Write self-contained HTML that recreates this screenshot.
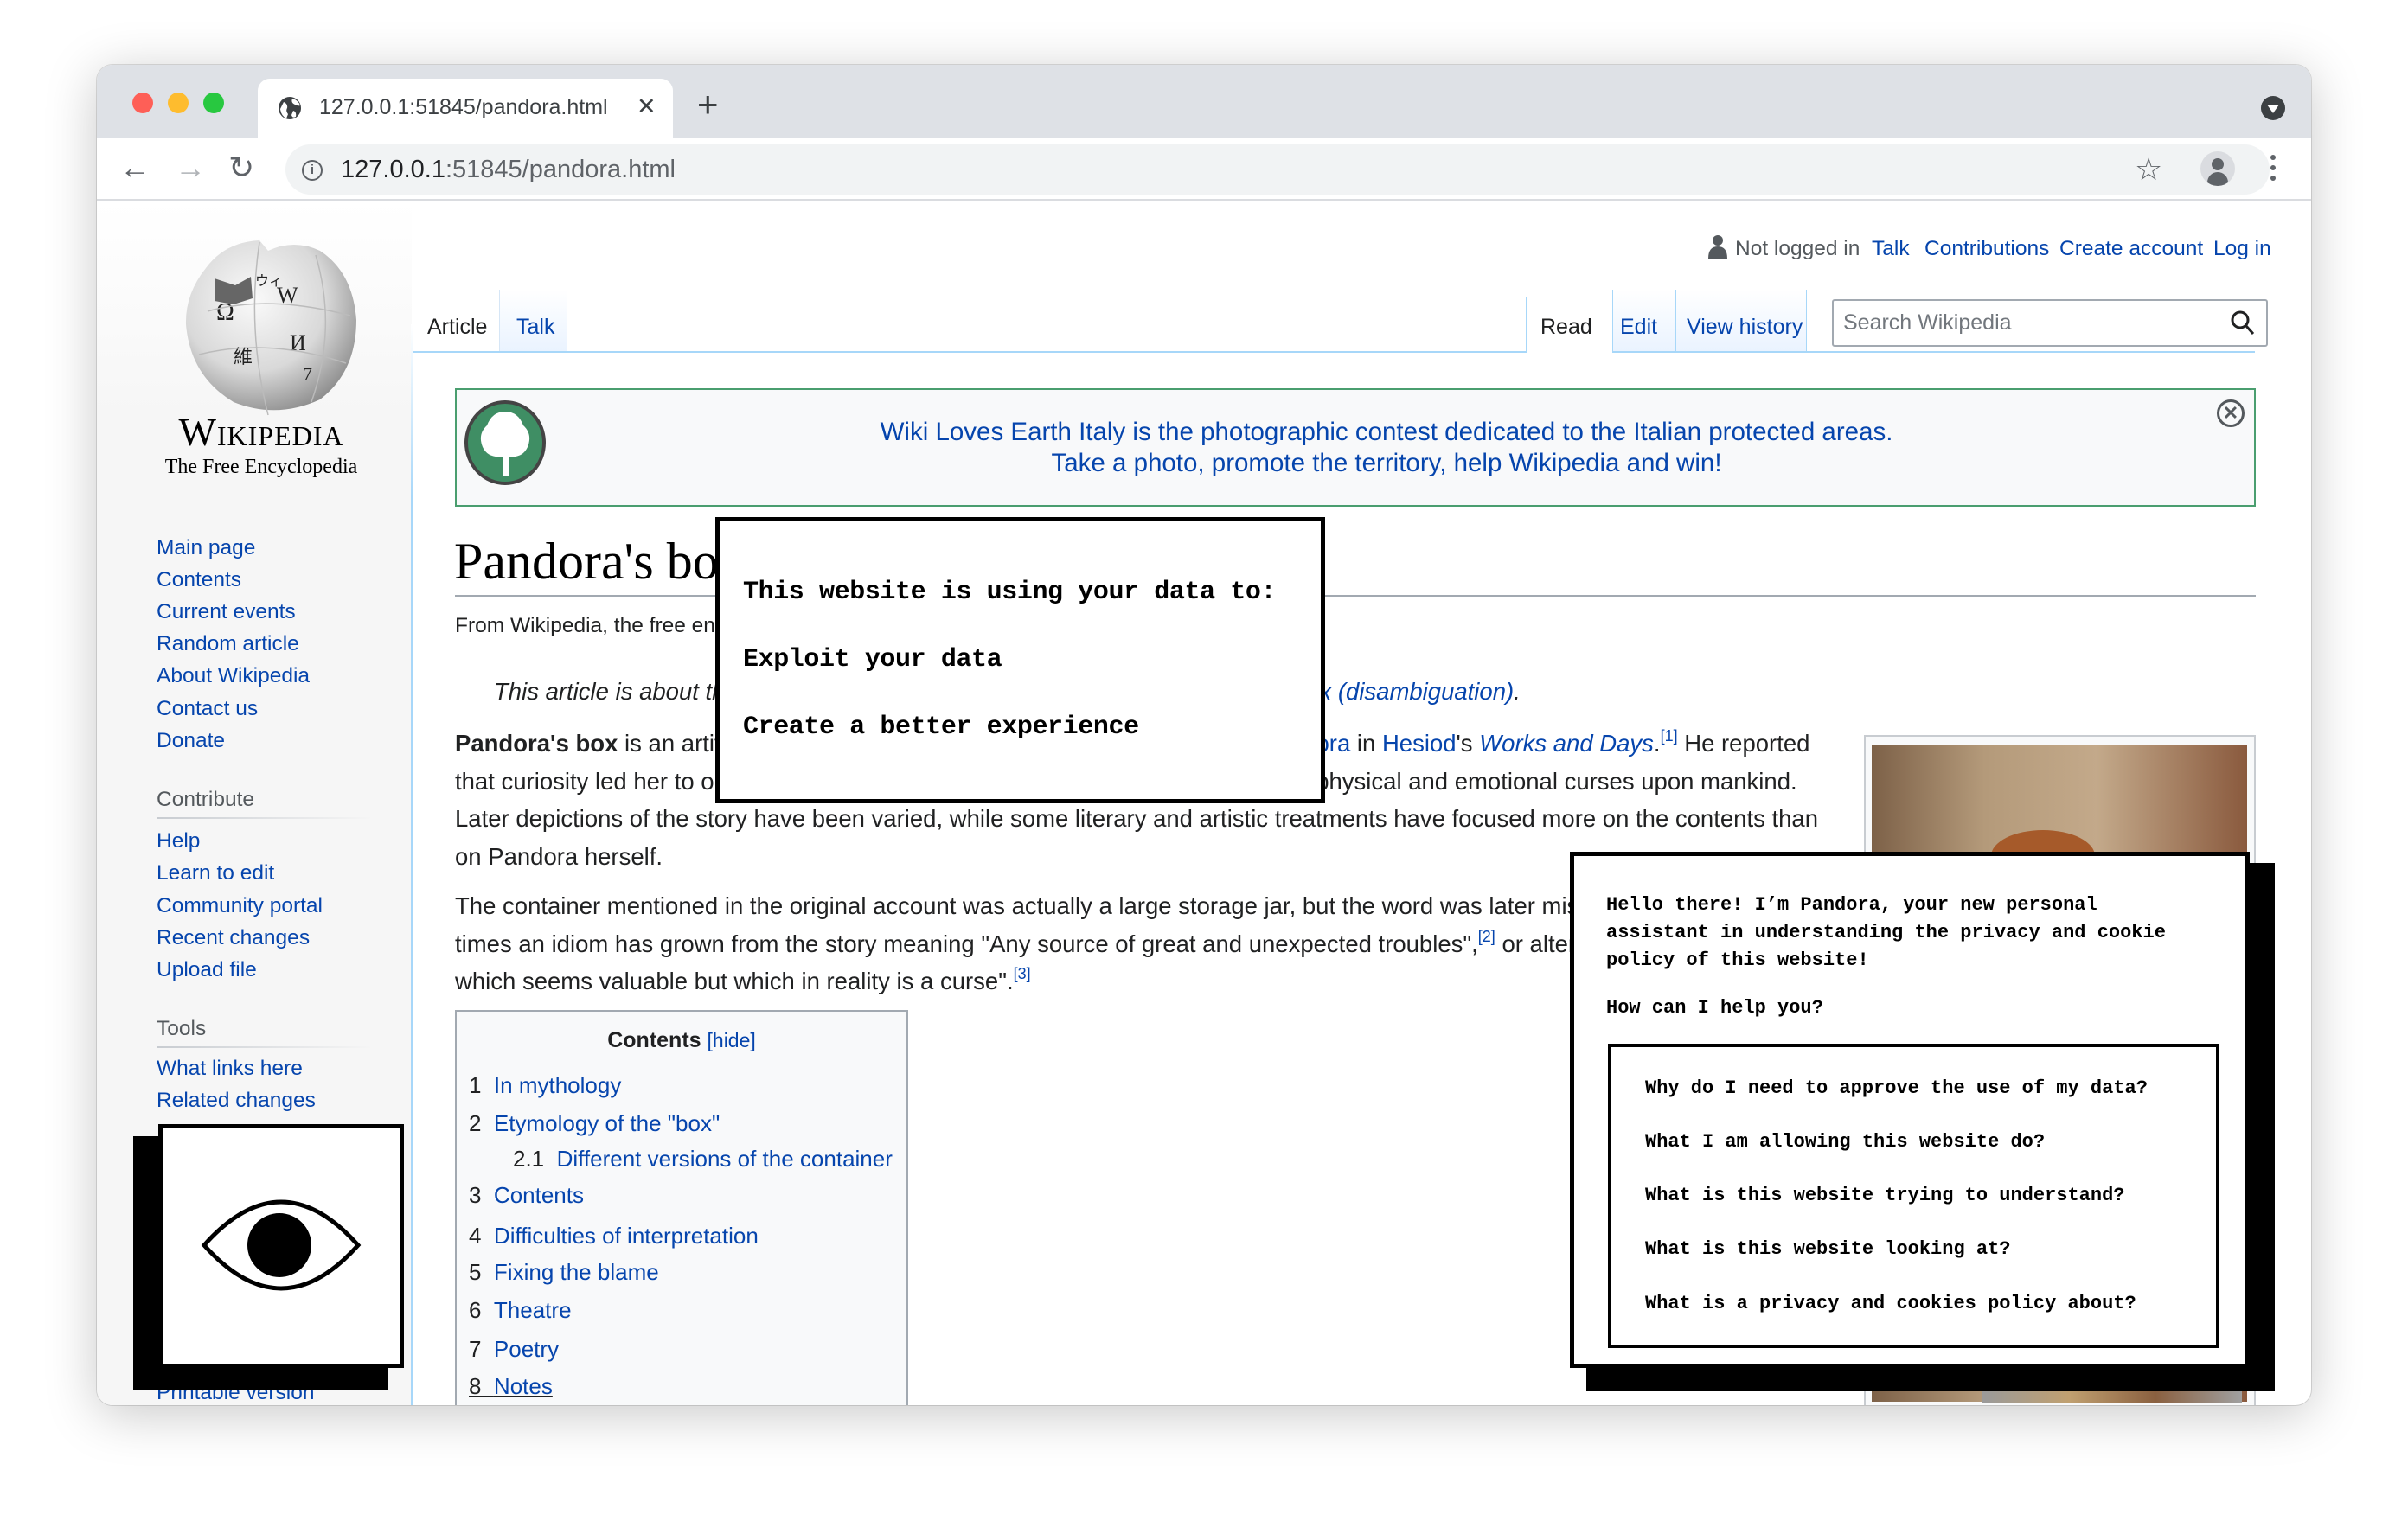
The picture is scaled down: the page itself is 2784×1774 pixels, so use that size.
<!DOCTYPE html>
<html><head><meta charset="utf-8">
<style>
*{margin:0;padding:0;box-sizing:border-box}
body{width:2784px;height:1774px;background:#fff;position:relative;overflow:hidden;font-family:"Liberation Sans",Arial,sans-serif}
.a{position:absolute;white-space:nowrap}
.win{position:absolute;left:112px;top:75px;width:2560px;height:1550px;border-radius:18px;overflow:hidden;background:#fff;box-shadow:0 10px 60px rgba(0,0,0,.22),0 0 0 1px rgba(0,0,0,.12)}
.lnk{color:#0645ad}
.sb{font-size:24.5px;color:#0645ad;left:69px}
.body{font-size:26.5px;color:#202122}
.pop{font-family:"Liberation Mono",monospace;font-weight:bold;color:#000}
sup{line-height:0;font-size:18px;vertical-align:12px}
</style></head><body>
<div class="win">
 <div class="a" style="left:0;top:0;width:2560px;height:85px;background:#dee1e6"></div>
 <div class="a" style="left:41px;top:32px;width:24px;height:24px;border-radius:50%;background:#fe5f57"></div>
 <div class="a" style="left:82px;top:32px;width:24px;height:24px;border-radius:50%;background:#febc2e"></div>
 <div class="a" style="left:123px;top:32px;width:24px;height:24px;border-radius:50%;background:#28c840"></div>
 <div class="a" style="left:186px;top:16px;width:480px;height:72px;background:#fff;border-radius:14px 14px 0 0"></div>
 <svg class="a" style="left:208px;top:35px" width="30" height="30" viewBox="0 0 30 30"><circle cx="15" cy="15" r="13" fill="#3c4043"/><path d="M8 8 Q13 10 12 15 Q10 18 13 22 L11 27 Q5 24 4 16Z M18 4 Q16 9 21 11 Q25 13 27 12 Q25 6 18 4Z M19 18 Q23 19 22 25 Q18 27 17 23Z" fill="#fff"/></svg>
 <div class="a" style="left:257px;top:35px;font-size:25px;color:#3c4043">127.0.0.1:51845/pandora.html</div>
 <div class="a" style="left:624px;top:33px;font-size:27px;color:#3c4043">✕</div>
 <div class="a" style="left:694px;top:22px;font-size:42px;color:#3c4043;font-weight:300">+</div>
 <div class="a" style="left:2502px;top:36px;width:28px;height:28px;border-radius:50%;background:#3c4043"></div>
 <div class="a" style="left:2509px;top:46px;width:0;height:0;border-left:7px solid transparent;border-right:7px solid transparent;border-top:10px solid #fff"></div>
 <div class="a" style="left:0;top:85px;width:2560px;height:72px;background:#fff;border-bottom:2px solid #dadce0"></div>
 <div class="a" style="left:26px;top:98px;font-size:36px;color:#5f6368">←</div>
 <div class="a" style="left:90px;top:98px;font-size:36px;color:#b0b3b7">→</div>
 <div class="a" style="left:152px;top:98px;font-size:36px;color:#5f6368">↻</div>
 <div class="a" style="left:218px;top:92px;width:2294px;height:58px;border-radius:29px;background:#f1f3f4"></div>
 <div class="a" style="left:237px;top:110px;width:24px;height:24px;border:2.5px solid #5f6368;border-radius:50%;font-size:15px;text-align:center;line-height:19px;color:#5f6368;font-weight:bold">i</div>
 <div class="a" style="left:282px;top:105px;font-size:29px;color:#202124">127.0.0.1<span style="color:#5f6368">:51845/pandora.html</span></div>
 <div class="a" style="left:2356px;top:100px;font-size:36px;color:#5f6368">☆</div>
 <div class="a" style="left:2432px;top:100px;width:40px;height:40px;border-radius:50%;background:#dadce0;overflow:hidden"><div style="position:absolute;left:13px;top:8px;width:14px;height:14px;border-radius:50%;background:#5f6368"></div><div style="position:absolute;left:8px;top:24px;width:24px;height:18px;border-radius:12px 12px 0 0;background:#5f6368"></div></div>
 <div class="a" style="left:2513px;top:104px;width:6px;height:6px;border-radius:50%;background:#5f6368;box-shadow:0 12px 0 #5f6368,0 24px 0 #5f6368"></div>

 <div class="a" style="left:0;top:158px;width:364px;height:1392px;background:linear-gradient(#fff 0,#f6f6f6 250px)"></div>
 <div class="a" style="left:363px;top:300px;width:2px;height:1250px;background:linear-gradient(#fff,#a7d7f9 200px)"></div>
 <svg class="a" style="left:88px;top:195px" width="230" height="220" viewBox="0 0 230 220">
  <defs><radialGradient id="g" cx="40%" cy="35%" r="70%"><stop offset="0" stop-color="#fafafa"/><stop offset=".6" stop-color="#d9d9d9"/><stop offset="1" stop-color="#8e8e8e"/></radialGradient></defs>
  <path d="M38 40 Q60 10 100 8 L110 20 Q140 6 170 20 Q208 45 212 100 Q212 160 170 192 Q120 215 70 195 Q20 165 15 105 Q14 70 38 40Z" fill="url(#g)"/>
  <path d="M48 52 L72 60 L90 50 L92 75 L70 82 L48 78Z" fill="#666"/>
  <g font-family="Liberation Serif,serif" fill="#222" font-size="26"><text x="120" y="80">W</text><text x="50" y="100" font-size="28">Ω</text><text x="135" y="135">И</text><text x="70" y="150" font-size="22" font-family="Noto Sans CJK SC,sans-serif">維</text><text x="150" y="170" font-size="22">7</text><text x="95" y="60" font-size="16">ウィ</text></g>
  <g stroke="#bbb" fill="none" stroke-width="1.5"><path d="M40 90 Q110 70 205 95 M30 140 Q110 120 200 150 M100 10 Q85 110 110 210 M165 25 Q190 110 160 195"/></g>
 </svg>
 <div class="a" style="left:50px;top:398px;width:280px;text-align:center;font-family:'Liberation Serif',serif;font-size:46px;color:#000;font-variant:small-caps;letter-spacing:1px">Wikipedia</div>
 <div class="a" style="left:50px;top:452px;width:280px;text-align:center;font-family:'Liberation Serif',serif;font-size:24px;color:#000">The Free Encyclopedia</div>

 <div class="a sb" style="top:545px">Main page</div>
 <div class="a sb" style="top:582px">Contents</div>
 <div class="a sb" style="top:619px">Current events</div>
 <div class="a sb" style="top:656px">Random article</div>
 <div class="a sb" style="top:693px">About Wikipedia</div>
 <div class="a sb" style="top:731px">Contact us</div>
 <div class="a sb" style="top:768px">Donate</div>
 <div class="a sb" style="top:836px;color:#54595d">Contribute</div>
 <div class="a" style="left:69px;top:870px;width:250px;height:2px;background:linear-gradient(90deg,#c8ccd1,#f6f6f6)"></div>
 <div class="a sb" style="top:884px">Help</div>
 <div class="a sb" style="top:921px">Learn to edit</div>
 <div class="a sb" style="top:959px">Community portal</div>
 <div class="a sb" style="top:996px">Recent changes</div>
 <div class="a sb" style="top:1033px">Upload file</div>
 <div class="a sb" style="top:1101px;color:#54595d">Tools</div>
 <div class="a" style="left:69px;top:1135px;width:250px;height:2px;background:linear-gradient(90deg,#c8ccd1,#f6f6f6)"></div>
 <div class="a sb" style="top:1147px">What links here</div>
 <div class="a sb" style="top:1184px">Related changes</div>
 <div class="a sb" style="top:1522px">Printable version</div>

 <div class="a" style="left:42px;top:1239px;width:295px;height:293px;background:#000"></div>
 <div class="a" style="left:71px;top:1225px;width:284px;height:282px;background:#fff;border:5px solid #000"></div>
 <svg class="a" style="left:120px;top:1310px" width="186" height="110" viewBox="0 0 186 110"><path d="M4 55 Q93 -45 182 55 Q93 155 4 55Z" fill="#fff" stroke="#000" stroke-width="5"/><circle cx="91" cy="55" r="37" fill="#000"/></svg>

 <svg class="a" style="left:1862px;top:196px" width="24" height="28" viewBox="0 0 24 28"><circle cx="12" cy="7" r="6" fill="#54595d"/><path d="M1 28 Q1 14 12 14 Q23 14 23 28Z" fill="#54595d"/></svg>
 <div class="a" style="left:1894px;top:199px;font-size:24.5px;color:#54595d">Not logged in</div>
 <div class="a lnk" style="left:2052px;top:199px;font-size:24.5px">Talk</div>
 <div class="a lnk" style="left:2113px;top:199px;font-size:24.5px">Contributions</div>
 <div class="a lnk" style="left:2269px;top:199px;font-size:24.5px">Create account</div>
 <div class="a lnk" style="left:2447px;top:199px;font-size:24.5px">Log in</div>

 <div class="a" style="left:365px;top:331px;width:2130px;height:2px;background:#a7d7f9"></div>
 <div class="a" style="left:465px;top:260px;width:79px;height:71px;background:linear-gradient(#fff,#eaf3ff);border-left:1px solid #d6e6f6;border-right:1px solid #a7d7f9"></div>
 <div class="a" style="left:382px;top:289px;font-size:25px;color:#202122">Article</div>
 <div class="a lnk" style="left:485px;top:289px;font-size:25px">Talk</div>
 <div class="a" style="left:1652px;top:268px;width:100px;height:65px;background:#fff;border-left:1px solid #a7d7f9"></div>
 <div class="a" style="left:1752px;top:260px;width:73px;height:71px;background:linear-gradient(#fff,#eaf3ff);border-left:1px solid #a7d7f9"></div>
 <div class="a" style="left:1825px;top:260px;width:152px;height:71px;background:linear-gradient(#fff,#eaf3ff);border-left:1px solid #a7d7f9;border-right:1px solid #a7d7f9"></div>
 <div class="a" style="left:1669px;top:289px;font-size:25px;color:#202122">Read</div>
 <div class="a lnk" style="left:1761px;top:289px;font-size:25px">Edit</div>
 <div class="a lnk" style="left:1838px;top:289px;font-size:25px">View history</div>
 <div class="a" style="left:2006px;top:271px;width:504px;height:55px;border:2px solid #a2a9b1;border-radius:3px;background:#fff"></div>
 <div class="a" style="left:2019px;top:284px;font-size:25px;color:#72777d">Search Wikipedia</div>
 <svg class="a" style="left:2466px;top:283px" width="30" height="32" viewBox="0 0 30 32"><circle cx="12" cy="12" r="9" fill="none" stroke="#202122" stroke-width="3"/><path d="M19 19 L27 28" stroke="#202122" stroke-width="3"/></svg>

 <div class="a" style="left:414px;top:374px;width:2082px;height:137px;border:2px solid #4a9e6f;background:#f8f9fa"></div>
 <svg class="a" style="left:424px;top:387px" width="98" height="100" viewBox="0 0 98 100"><ellipse cx="48" cy="50" rx="45" ry="47" fill="#3f8e64" stroke="#444" stroke-width="4"/><path d="M45 88 L45 66 Q28 68 22 55 Q16 40 27 30 Q33 14 48 14 Q63 14 69 30 Q80 40 74 55 Q68 68 52 66 L52 88Z" fill="#fff"/></svg>
 <div class="a lnk" style="left:1491px;top:408px;font-size:29.5px;transform:translateX(-50%)">Wiki Loves Earth Italy is the photographic contest dedicated to the Italian protected areas.</div>
 <div class="a lnk" style="left:1491px;top:444px;font-size:29.5px;transform:translateX(-50%)">Take a photo, promote the territory, help Wikipedia and win!</div>
 <div class="a" style="left:2451px;top:387px;width:32px;height:32px;border:3px solid #54595d;border-radius:50%;text-align:center;line-height:26px;font-size:22px;color:#54595d;font-weight:bold">✕</div>

 <div class="a" style="left:413px;top:540px;font-family:'Liberation Serif',serif;font-size:60px;color:#000">Pandora's box</div>
 <div class="a" style="left:414px;top:613px;width:2082px;height:2px;background:#a2a9b1"></div>
 <div class="a body" style="left:414px;top:635px;font-size:24.5px">From Wikipedia, the free encyclopedia</div>
 <div class="a body" style="left:459px;top:709px;font-style:italic;font-size:27.5px">This article is about the mythological artifact. For other uses, see <span class="lnk">Pandora's box (disambiguation)</span>.</div>

 <div class="a body" style="left:414px;top:763px;line-height:43.5px;font-size:27.5px">
 <b>Pandora's box</b> is an artifact in Greek mythology connected with the myth of <span class="lnk">Pandora</span> in <span class="lnk">Hesiod</span>'s <i class="lnk">Works and Days</i>.<sup class="lnk">[1]</sup> He reported<br>
 that curiosity led her to open a container left in the care of her husband, releasing physical and emotional curses upon mankind.<br>
 Later depictions of the story have been varied, while some literary and artistic treatments have focused more on the contents than<br>
 on Pandora herself.</div>
 <div class="a body" style="left:414px;top:951px;line-height:43.5px;font-size:27.5px">
 The container mentioned in the original account was actually a large storage jar, but the word was later mistranslated as "box".<br>
 times an idiom has grown from the story meaning "Any source of great and unexpected troubles",<sup class="lnk">[2]</sup> or alternatively "A present<br>
 which seems valuable but which in reality is a curse".<sup class="lnk">[3]</sup></div>

 <div class="a" style="left:2043px;top:775px;width:453px;height:780px;border:2px solid #c8ccd1;background:#f8f9fa"></div>
 <div class="a" style="left:2052px;top:786px;width:434px;height:760px;background:radial-gradient(ellipse 150px 130px at 55% 38% ,#7a9fd6 0,#7398cf 96%,transparent 100%),linear-gradient(90deg,#7d6148,#b49a7a 30%,#c3a98a 60%,#8a5a3e);"></div>
 <div class="a" style="left:2190px;top:885px;width:120px;height:60px;border-radius:50% 50% 20% 20%;background:#a65a2a"></div>
 <div class="a" style="left:2180px;top:1508px;width:300px;height:40px;background:linear-gradient(90deg,#9a9a9a,#c0a070,#8a6040,#a0a0a0)"></div>

 <div class="a" style="left:414px;top:1093px;width:524px;height:480px;border:2px solid #a2a9b1;background:#f8f9fa"></div>
 <div class="a" style="left:676px;top:1114px;font-size:25px;color:#202122;transform:translateX(-50%)"><b>Contents</b> <span class="lnk" style="font-size:23px">[hide]</span></div>
 <div class="a body" style="left:430px;top:1165px;font-size:26px">1&nbsp;&nbsp;<span class="lnk">In mythology</span></div>
 <div class="a body" style="left:430px;top:1209px;font-size:26px">2&nbsp;&nbsp;<span class="lnk">Etymology of the "box"</span></div>
 <div class="a body" style="left:481px;top:1250px;font-size:26px">2.1&nbsp;&nbsp;<span class="lnk">Different versions of the container</span></div>
 <div class="a body" style="left:430px;top:1292px;font-size:26px">3&nbsp;&nbsp;<span class="lnk">Contents</span></div>
 <div class="a body" style="left:430px;top:1339px;font-size:26px">4&nbsp;&nbsp;<span class="lnk">Difficulties of interpretation</span></div>
 <div class="a body" style="left:430px;top:1381px;font-size:26px">5&nbsp;&nbsp;<span class="lnk">Fixing the blame</span></div>
 <div class="a body" style="left:430px;top:1425px;font-size:26px">6&nbsp;&nbsp;<span class="lnk">Theatre</span></div>
 <div class="a body" style="left:430px;top:1470px;font-size:26px">7&nbsp;&nbsp;<span class="lnk">Poetry</span></div>
 <div class="a body" style="left:430px;top:1513px;font-size:26px;text-decoration:underline">8&nbsp;&nbsp;<span class="lnk">Notes</span></div>

 <div class="a" style="left:715px;top:523px;width:705px;height:331px;background:#fff;border:5px solid #000"></div>
 <div class="a pop" style="left:747px;top:593px;font-size:30px;letter-spacing:-0.4px">This website is using your data to:</div>
 <div class="a pop" style="left:747px;top:671px;font-size:30px;letter-spacing:-0.4px">Exploit your data</div>
 <div class="a pop" style="left:747px;top:749px;font-size:30px;letter-spacing:-0.4px">Create a better experience</div>

 <div class="a" style="left:1722px;top:923px;width:796px;height:611px;background:#000"></div>
 <div class="a" style="left:1703px;top:910px;width:786px;height:597px;background:#fff;border:5px solid #000"></div>
 <div class="a pop" style="left:1745px;top:956px;font-size:22px;line-height:32px">Hello there! I’m Pandora, your new personal<br>assistant in understanding the privacy and cookie<br>policy of this website!</div>
 <div class="a pop" style="left:1745px;top:1078px;font-size:22px">How can I help you?</div>
 <div class="a" style="left:1747px;top:1132px;width:707px;height:352px;border:4px solid #000"></div>
 <div class="a pop" style="left:1790px;top:1171px;font-size:22px">Why do I need to approve the use of my data?</div>
 <div class="a pop" style="left:1790px;top:1233px;font-size:22px">What I am allowing this website do?</div>
 <div class="a pop" style="left:1790px;top:1295px;font-size:22px">What is this website trying to understand?</div>
 <div class="a pop" style="left:1790px;top:1357px;font-size:22px">What is this website looking at?</div>
 <div class="a pop" style="left:1790px;top:1420px;font-size:22px">What is a privacy and cookies policy about?</div>
</div>
</body></html>
